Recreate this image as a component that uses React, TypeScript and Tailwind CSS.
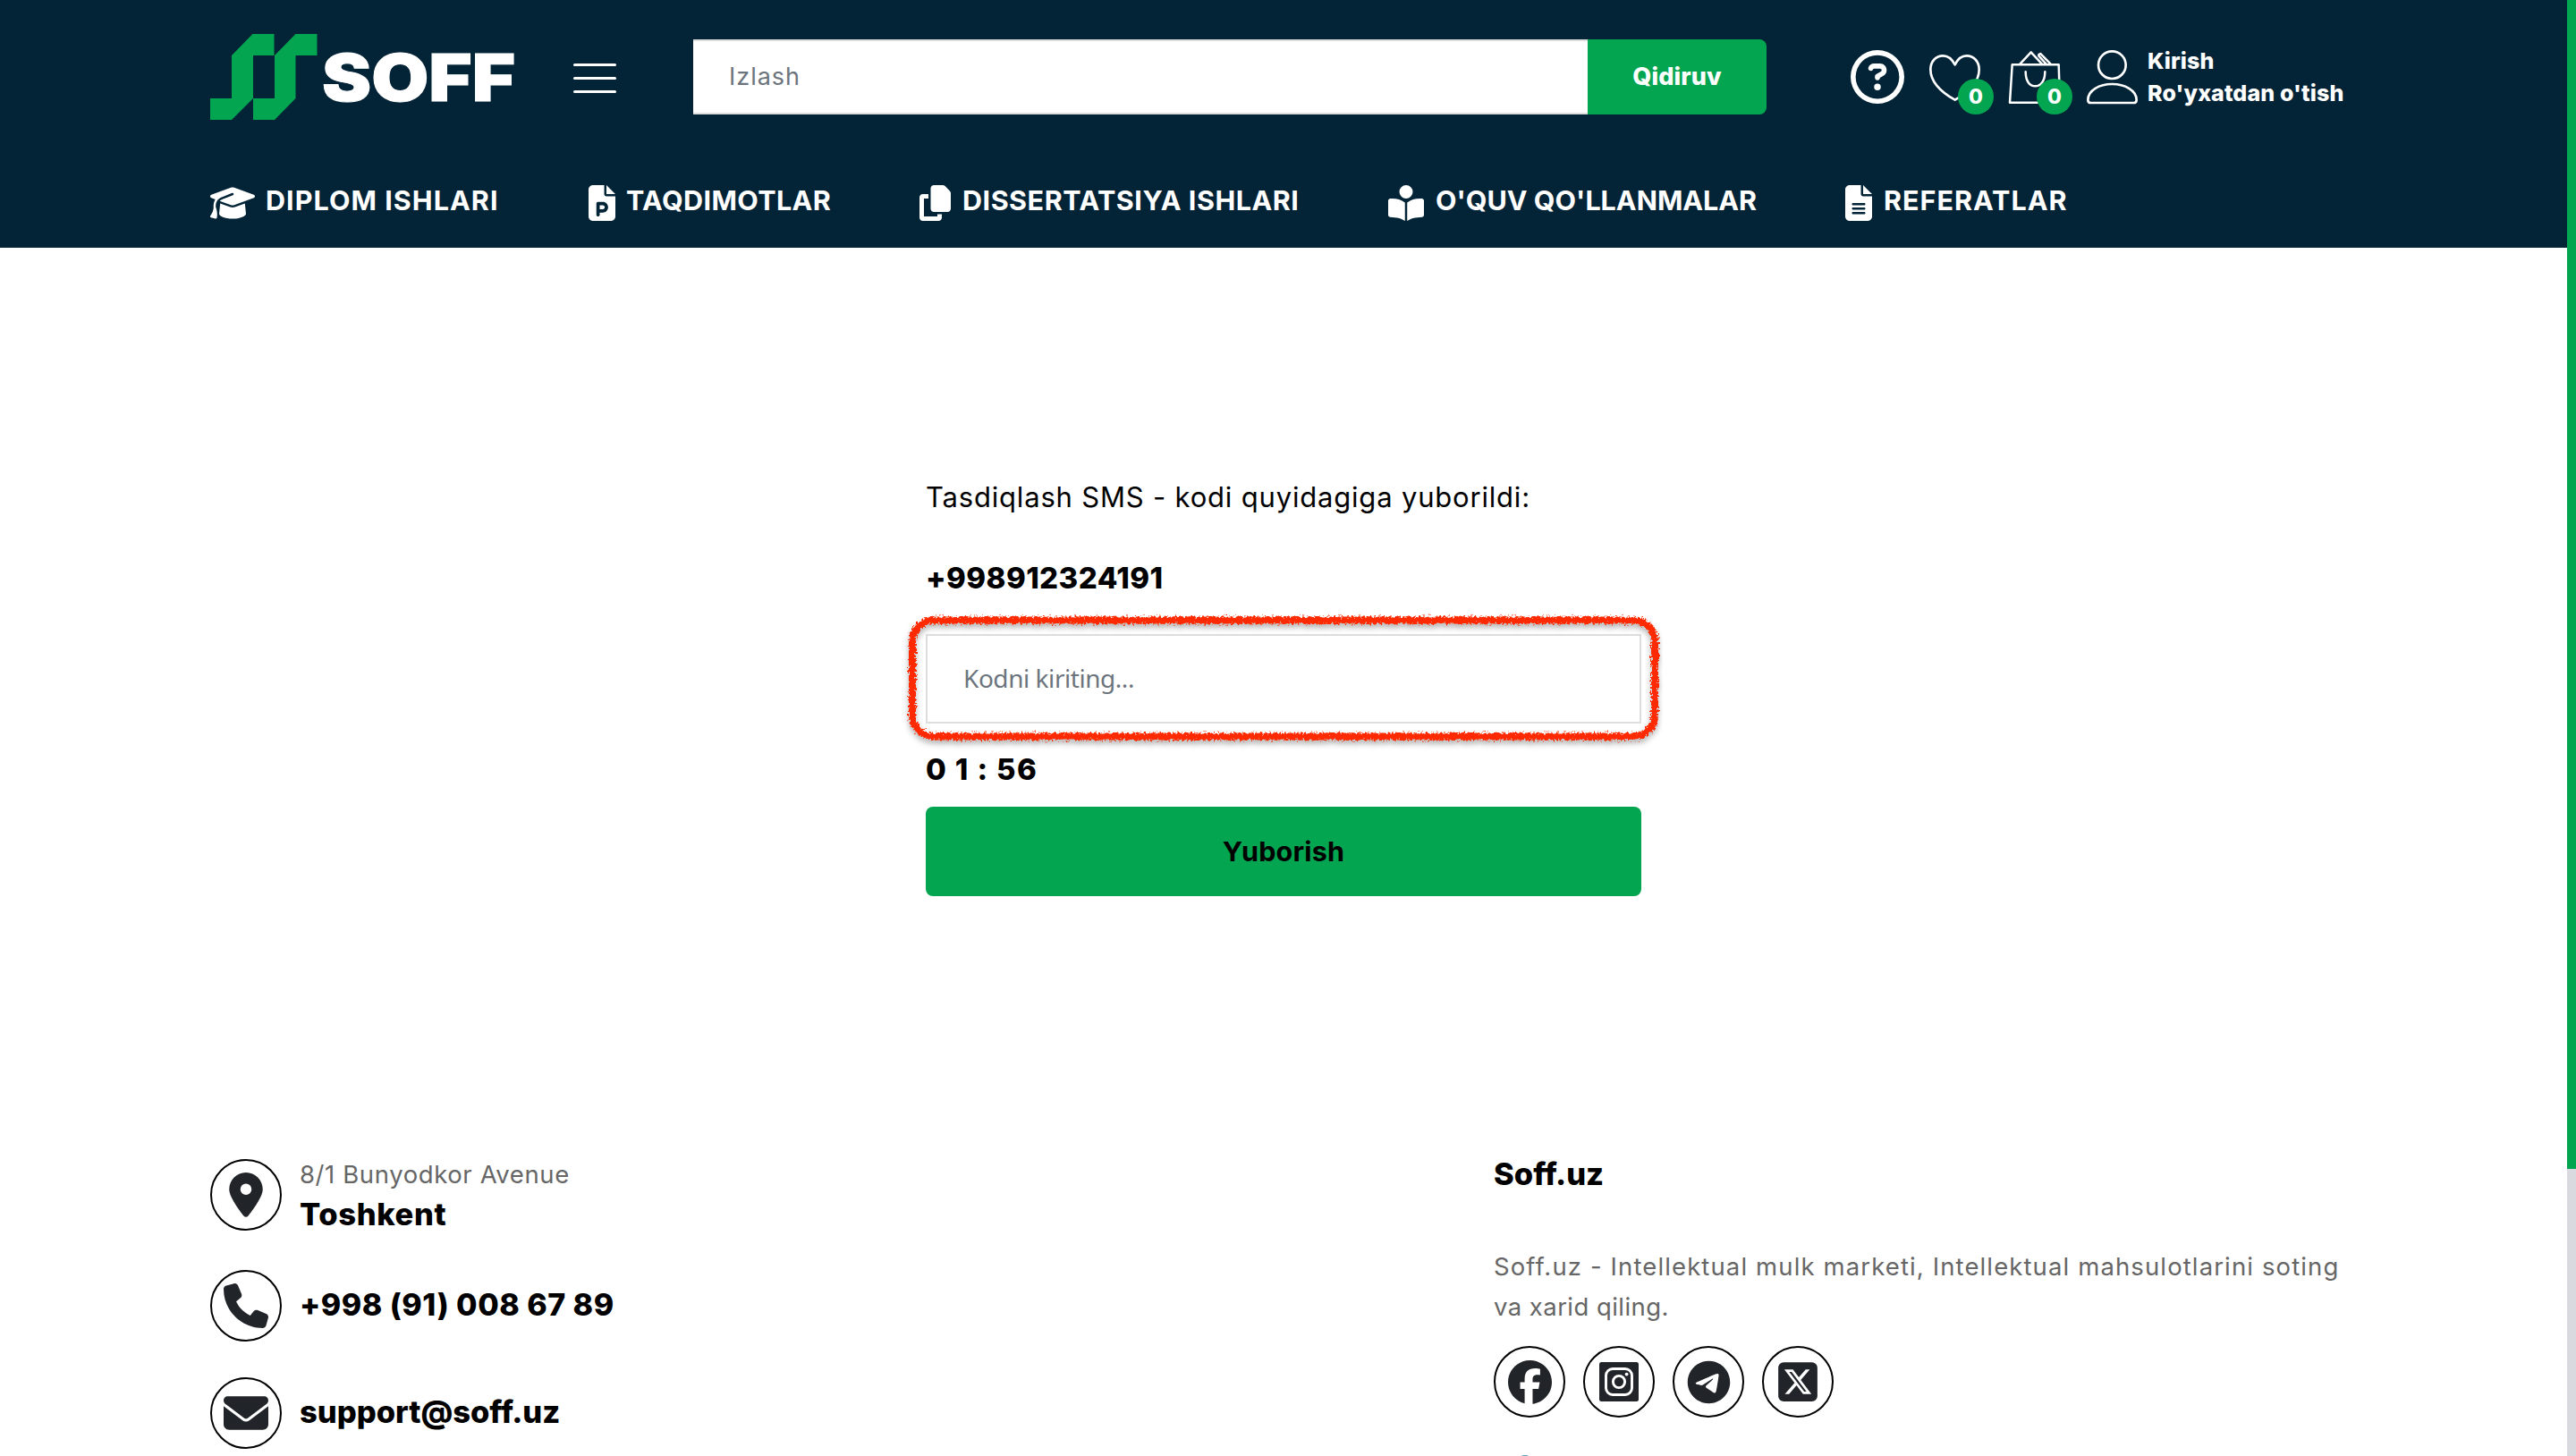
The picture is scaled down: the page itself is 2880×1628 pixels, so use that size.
import { ReactNode } from "react";
import {
  FaBookOpenReader,
  FaCopy,
  FaEnvelope,
  FaFacebook,
  FaFileLines,
  FaFilePowerpoint,
  FaGraduationCap,
  FaLocationDot,
  FaPhone,
  FaRegCircleQuestion,
  FaSquareXTwitter,
  FaTelegram,
} from "react-icons/fa6";

const NAV = [
  { label: "DIPLOM ISHLARI", icon: <FaGraduationCap className="h-10 w-[50px]" />, text: "w-[258px] ml-[12px] tracking-[1.05px]", item: "mr-[103px]" },
  { label: "TAQDIMOTLAR", icon: <FaFilePowerpoint className="h-10 w-[30px]" />, text: "w-[228px] ml-[12px] tracking-[0.4px]", item: "mr-[100px]" },
  { label: "DISSERTATSIYA ISHLARI", icon: <FaCopy className="h-10 w-[35px]" />, text: "w-[374px] ml-[13px] tracking-[0.52px]", item: "mr-[102px]" },
  { label: "O'QUV QO'LLANMALAR", icon: <FaBookOpenReader className="h-10 w-10" />, text: "w-[358px] ml-[13px] tracking-[0px]", item: "mr-[100px]" },
  { label: "REFERATLAR", icon: <FaFileLines className="h-10 w-[30px]" />, text: "w-[203px] ml-[13px] tracking-[1px]", item: "" },
];

const Logo = () => (
  <svg width="342" height="98" viewBox="0 0 342 98" className="shrink-0">
    <g fill="#03a550">
      <path d="M0 73H24V25L47.500 1H71.500V25H48V73L24 97H0Z" />
      <path d="M48 73H72V25L95.500 1H119.500V25H95.500V73L72 97H48Z" />
    </g>
    <text
      x="125"
      y="75.500"
      fill="#fff"
      stroke="#fff"
      strokeWidth="1"
      fontSize="73"
      fontWeight="900"
      fontFamily="Inter, sans-serif"
      textLength="216"
      lengthAdjust="spacingAndGlyphs"
    >
      SOFF
    </text>
  </svg>
);

const Heart = () => (
  <svg width="57" height="52" viewBox="291 50 171 156" fill="none" stroke="#fff" strokeWidth="8" strokeLinejoin="round">
    <path d="M377 84C366 63 352 54 337 54C312 54 295 74 295 100C295 142 333 177 377 202C421 177 458 142 458 100C458 74 441 54 416 54C401 54 387 63 377 84Z" />
  </svg>
);

const Bag = () => (
  <svg width="59" height="61" viewBox="554 34 177 183" fill="none" stroke="#fff" strokeWidth="7.500" strokeLinejoin="round" strokeLinecap="round">
    <path d="M568 83H724L728 210H560Z" />
    <path d="M594 81L631 41L668 81M657 53L682 81M657 49L663 46L697 81" />
    <path d="M613 107C613 140 628 155 645 155C662 155 678 140 678 107" />
  </svg>
);

const User = () => (
  <svg width="57" height="61" viewBox="819 32 171 183" fill="none" stroke="#fff" strokeWidth="8" strokeLinejoin="round">
    <circle cx="904" cy="82" r="46" />
    <path d="M823 199C823 167 862 146 904 146C946 146 986 167 986 199Q986 209 976 209H833Q823 209 823 199Z" />
  </svg>
);

const Instagram = () => (
  <svg width="44" height="44" viewBox="0 0 44 44" fill="none" stroke="#fff" strokeWidth="2.900">
    <rect width="44" height="44" rx="2.500" fill="#212529" stroke="none" />
    <rect x="7.500" y="7.500" width="29" height="29" rx="7.500" />
    <circle cx="22" cy="22" r="6.600" />
    <circle cx="30.600" cy="13.600" r="1.900" fill="#fff" stroke="none" />
  </svg>
);

const Badge = () => (
  <span className="absolute right-0 bottom-0 flex size-10 items-center justify-center rounded-full bg-[#03a550] text-[23px] font-extrabold text-white">
    0
  </span>
);

const Circle = ({ children }: { children: ReactNode }) => (
  <div className="flex size-20 shrink-0 items-center justify-center rounded-full border-2 border-black text-[#212529]">
    {children}
  </div>
);

// hand drawn red outline round the code field
const CrayonFrame = () => (
  <svg className="pointer-events-none absolute -top-[27px] -left-[28px]" width="850" height="156" viewBox="0 0 850 156">
    <defs>
      <filter id="crayon" x="-5%" y="-15%" width="110%" height="130%" colorInterpolationFilters="sRGB">
        <feTurbulence type="fractalNoise" baseFrequency="0.4" numOctaves="2" seed="4" result="noise" />
        <feDisplacementMap in="SourceGraphic" in2="noise" scale="8" xChannelSelector="R" yChannelSelector="G" result="rough" />
        <feDropShadow in="rough" dx="0" dy="4" stdDeviation="3" floodColor="#000" floodOpacity="0.3" />
      </filter>
    </defs>
    <rect x="11" y="9.500" width="830" height="130" rx="24" fill="none" stroke="#ff2a00" strokeWidth="8" filter="url(#crayon)" />
  </svg>
);

const Header = () => (
  <header className="h-[277px] bg-[#032336] pl-[235px] text-white">
    <div className="flex h-[172px] items-center">
      <Logo />
      <div className="ml-[64px] flex w-12 flex-col gap-3 pt-[3px]">
        <span className="h-[3px] rounded-full bg-white" />
        <span className="h-[3px] rounded-full bg-white" />
        <span className="h-[3px] rounded-full bg-white" />
      </div>
      <div className="ml-[86px] flex h-[84px] w-[1200px]">
        <div className="flex w-[1000px] items-center border-y-2 border-[#ddd] bg-white pl-[40px] text-[27px] tracking-[1px] text-[#6c757d]">
          Izlash
        </div>
        <button className="w-[200px] rounded-r-lg bg-[#03a550] text-[27px] font-extrabold tracking-[0.1px]">Qidiruv</button>
      </div>
      <div className="ml-[94px] flex h-[84px] items-center">
        <FaRegCircleQuestion className="size-[60px]" />
        <div className="relative ml-7 h-full w-[72px] pt-[17px]">
          <Heart />
          <Badge />
        </div>
        <div className="relative ml-4 h-full w-[72px] pt-[12px]">
          <Bag />
          <Badge />
        </div>
        <div className="ml-4">
          <User />
        </div>
        <div className="ml-[11px] text-[25px] leading-[36px] font-extrabold tracking-[0.15px] whitespace-nowrap">
          <p>Kirish</p>
          <p>Ro'yxatdan o'tish</p>
        </div>
      </div>
    </div>
    <nav className="flex pt-[35px] text-[30.5px] leading-[34px] font-bold whitespace-nowrap">
      {NAV.map((n) => (
        <a key={n.label} className={`flex ${n.item}`}>
          {n.icon}
          <span className={n.text}>{n.label}</span>
        </a>
      ))}
    </nav>
  </header>
);

const CodeForm = () => (
  <main className="ml-[1035px] w-[800px] pt-[259px] whitespace-nowrap text-black">
    <p className="text-[31px] leading-10 tracking-[0.81px]">Tasdiqlash SMS - kodi quyidagiga yuborildi:</p>
    <p className="mt-[50px] text-[33px] leading-10 font-extrabold tracking-[0.42px]">+998912324191</p>
    <div className="relative mt-[43px] flex h-[100px] items-center border-2 border-[#ddd] pb-[2px] pl-[40px] font-['Noto_Sans',sans-serif] text-[28px] tracking-[-0.45px] text-[#6c757d]">
      Kodni kiriting...
      <CrayonFrame />
    </div>
    <p className="mt-[31px] text-[33px] leading-10 font-extrabold tracking-[1.4px]">0 1 : 56</p>
    <button className="mt-[22px] h-[100px] w-full rounded-lg bg-[#03a550] text-[30.5px] font-bold tracking-[0.2px]">
      Yuborish
    </button>
  </main>
);

const Footer = () => (
  <footer className="mt-[294px] flex pl-[235px] text-[34.5px] font-extrabold whitespace-nowrap text-black">
    <div className="w-[1435px]">
      <div className="flex gap-5">
        <Circle>
          <FaLocationDot className="h-[50px] w-[38px]" />
        </Circle>
        <div>
          <p className="text-[27.5px] leading-[35px] font-normal tracking-[0.6px] text-[#666]">8/1 Bunyodkor Avenue</p>
          <p className="mt-[5px] leading-[44px] tracking-[0.64px]">Toshkent</p>
        </div>
      </div>
      <div className="mt-10 flex gap-5">
        <Circle>
          <FaPhone className="size-[50px]" />
        </Circle>
        <p className="text-[34px] leading-[78px] tracking-[0.5px]">+998 (91) 008 67 89</p>
      </div>
      <div className="mt-10 flex gap-5">
        <Circle>
          <FaEnvelope className="size-[50px]" />
        </Circle>
        <p className="leading-[78px] tracking-[0px]">support@soff.uz</p>
      </div>
    </div>
    <div>
      <p className="leading-[34px]">Soff.uz</p>
      <p className="mt-[64px] text-[27.5px] leading-[45px] font-normal tracking-[1.12px] text-[#666]">
        Soff.uz - Intellektual mulk marketi, Intellektual mahsulotlarini soting
        <br />
        <span className="tracking-[0.44px]">va xarid qiling.</span>
      </p>
      <div className="mt-[21px] flex gap-5">
        <Circle>
          <FaFacebook className="size-[49px]" />
        </Circle>
        <Circle>
          <Instagram />
        </Circle>
        <Circle>
          <FaTelegram className="size-[49px]" />
        </Circle>
        <Circle>
          <FaSquareXTwitter className="size-[50px]" />
        </Circle>
      </div>
      <div className="mt-[42px] ml-[30px] h-1 w-[10px] rounded-t-full bg-[#5aa5bd]" />
    </div>
  </footer>
);

export default function App() {
  return (
    <div className="flex h-[1628px] w-[2880px] overflow-hidden bg-white font-[Inter,sans-serif]">
      <div className="w-[2870px]">
        <Header />
        <CodeForm />
        <Footer />
      </div>
      <div className="w-[10px] bg-[#d9dae0]">
        <div className="h-[1307px] bg-[#03a550]" />
      </div>
    </div>
  );
}
